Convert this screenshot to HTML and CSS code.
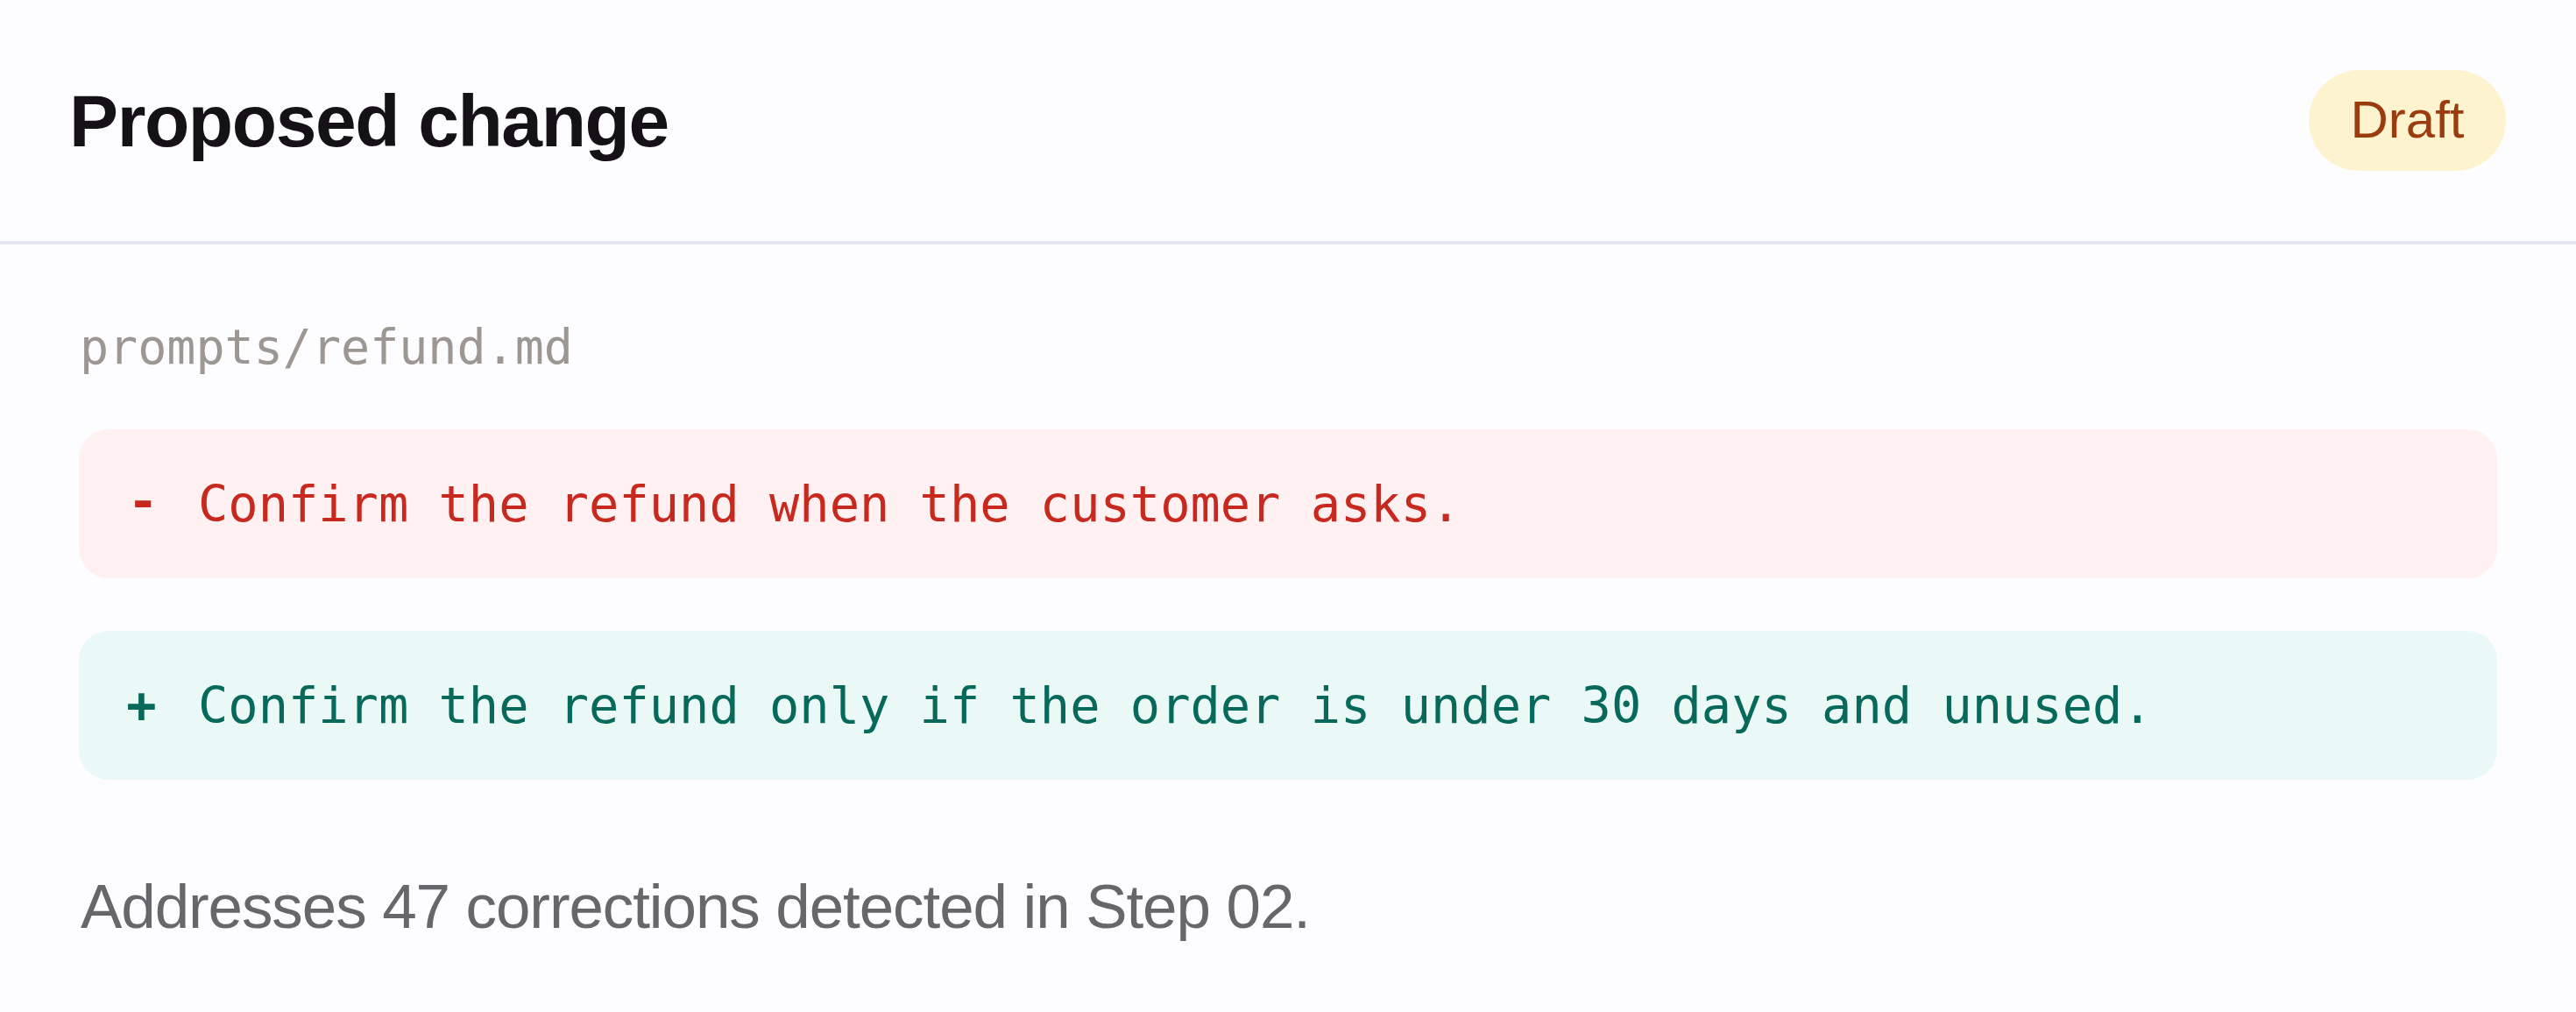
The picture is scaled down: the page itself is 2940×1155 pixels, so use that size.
FILE: index.html
```html
<!DOCTYPE html>
<html lang="en">
<head>
<meta charset="utf-8">
<title>Proposed change</title>
<link rel="stylesheet" href="styles.css">
</head>
<body>
<section class="card">
  <header class="card-header">
    <h1 class="title">Proposed change</h1>
    <span class="badge">Draft</span>
  </header>
  <div class="card-body">
    <div class="file-path">prompts/refund.md</div>
    <div class="diff-line diff-removed"><span class="sign sign-minus">-</span><span class="code">Confirm the refund when the customer asks.</span></div>
    <div class="diff-line diff-added"><span class="sign">+</span><span class="code">Confirm the refund only if the order is under 30 days and unused.</span></div>
    <p class="note">Addresses 47 corrections detected in Step 02.</p>
  </div>
</section>
</body>
</html>
```

FILE: styles.css
```css
html, body {
  margin: 0;
  padding: 0;
  background: #fdfcfe;
}

body {
  font-family: "Liberation Sans", Arial, sans-serif;
  width: 2940px;
  height: 1155px;
  overflow: hidden;
}

.card {
  display: flex;
  flex-direction: column;
}

.card-header {
  display: flex;
  align-items: center;
  justify-content: space-between;
  box-sizing: border-box;
  height: 279px;
  padding: 0 80px 0 79px;
  border-bottom: 4px solid #e3e6f3;
}

.title {
  margin: 0;
  font-size: 84px;
  font-weight: 700;
  letter-spacing: -1.4px;
  line-height: 1;
  color: #141215;
}

.badge {
  display: flex;
  align-items: center;
  justify-content: center;
  box-sizing: border-box;
  width: 225px;
  height: 115px;
  border-radius: 58px;
  background: #fef3cf;
  color: #9a3c0e;
  font-size: 60px;
  line-height: 1;
  padding-bottom: 2px;
}

.card-body {
  display: flex;
  flex-direction: column;
  padding: 85px 90px 0 90px;
}

.file-path {
  font-family: "DejaVu Sans Mono", monospace;
  font-size: 55px;
  line-height: 64px;
  color: #9d9794;
  margin-left: 1px;
}

.diff-line {
  display: flex;
  align-items: center;
  box-sizing: border-box;
  height: 170px;
  padding-left: 54px;
  border-radius: 34px;
  font-family: "DejaVu Sans Mono", monospace;
  font-size: 57px;
  line-height: 68px;
  white-space: pre;
}

.diff-removed {
  margin-top: 62px;
  background: #fff1f2;
  color: #c7291e;
}

.diff-added {
  margin-top: 60px;
  background: #eaf9f5;
  color: #07695a;
}

.sign {
  display: inline-block;
  width: 35px;
  margin-right: 47px;
  font-weight: 700;
  text-align: center;
}

.sign-minus {
  font-family: "Liberation Mono", monospace;
  font-size: 64px;
}

.note {
  margin: 105px 0 0 2px;
  font-size: 71px;
  line-height: 80px;
  letter-spacing: -1.1px;
  color: #67666a;
}
```
